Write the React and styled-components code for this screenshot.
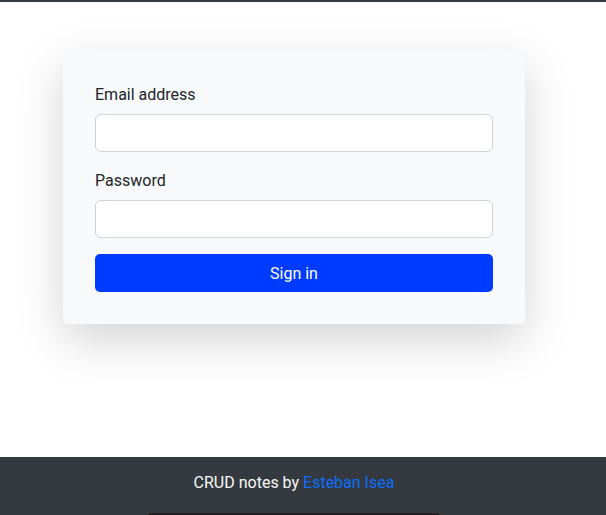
import React from "react";
import styled, { createGlobalStyle } from "styled-components";

const Global = createGlobalStyle`
  html, body { margin: 0; padding: 0; background: #fff; }
  body { font-family: Roboto, "Noto Sans", sans-serif; color: #212529; font-size: 16px; line-height: 24px; }
  * { box-sizing: border-box; }
`;

const TopBar = styled.div`
  height: 2px;
  background: #343a40;
`;

const Main = styled.main`
  height: 455px;
  padding-top: 48px;
  padding-left: 63px;
`;

const Card = styled.form`
  width: 462px;
  background: #f8f9fa;
  border-radius: 6px;
  padding: 32px;
  box-shadow: 0 16px 48px rgba(0, 0, 0, 0.175);
  display: flex;
  flex-direction: column;
`;

const Field = styled.div`
  display: flex;
  flex-direction: column;
  margin-bottom: 16px;
`;

const Label = styled.label`
  font-size: 16px;
  line-height: 24px;
  padding-top: 1px;
  margin-bottom: 7px;
  color: #212529;
`;

const Input = styled.input`
  height: 38px;
  border: 1px solid #ced4da;
  border-radius: 6px;
  background: #fff;
  padding: 6px 12px;
  font: inherit;
  outline: none;
`;

const Button = styled.button`
  height: 38px;
  border: none;
  border-radius: 5px;
  background: #003cff;
  color: #fff;
  font: inherit;
  font-size: 16px;
  padding: 2px 0 0;
  cursor: pointer;
`;

const Footer = styled.footer`
  background: #343a40;
  padding: 14px 18px 0 0;
  height: 58px;
  overflow: hidden;
`;

const FooterText = styled.p`
  margin: 0 0 18px;
  text-align: center;
  color: #f8f9fa;
  line-height: 24px;
`;

const Link = styled.a`
  color: #0d6efd;
  text-decoration: none;
`;

const Strip = styled.div`
  width: 290px;
  height: 4px;
  margin: 0 auto;
  background: #222;
`;

export default function App() {
  return (
    <>
      <Global />
      <TopBar />
      <Main>
        <Card onSubmit={(e) => e.preventDefault()}>
          <Field>
            <Label htmlFor="email">Email address</Label>
            <Input id="email" type="email" />
          </Field>
          <Field>
            <Label htmlFor="password">Password</Label>
            <Input id="password" type="password" />
          </Field>
          <Button type="submit">Sign in</Button>
        </Card>
      </Main>
      <Footer>
        <FooterText>
          CRUD notes by <Link href="#">Esteban Isea</Link>
        </FooterText>
        <Strip />
      </Footer>
    </>
  );
}
